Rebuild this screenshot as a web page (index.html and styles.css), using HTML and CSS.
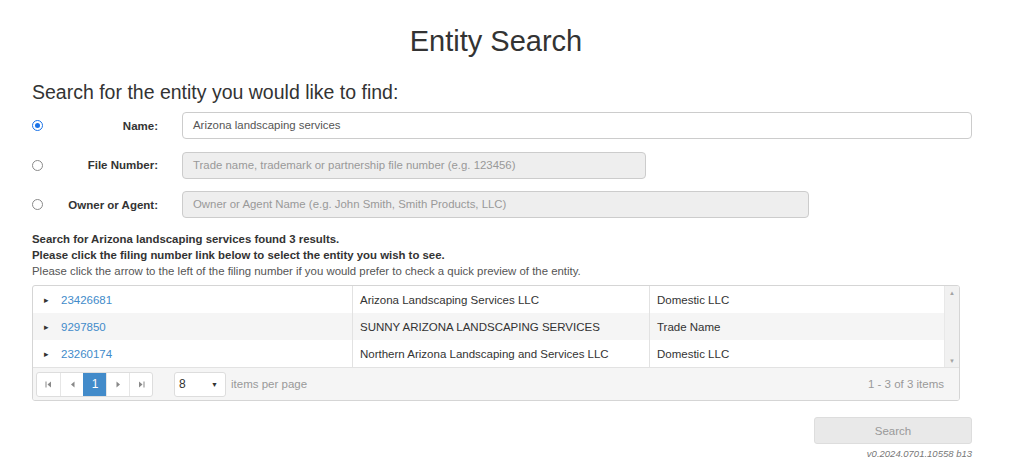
FILE: index.html
```html
<!DOCTYPE html>
<html>
<head>
<meta charset="utf-8">
<link rel="stylesheet" href="styles.css">
</head>
<body>
<div class="page">
  <h1 class="title">Entity Search</h1>
  <h2 class="subtitle">Search for the entity you would like to find:</h2>
  <div class="form">
    <div class="frow">
      <span class="radio checked"></span>
      <label class="flabel">Name:</label>
      <div class="input w-name">Arizona landscaping services</div>
    </div>
    <div class="frow">
      <span class="radio"></span>
      <label class="flabel">File Number:</label>
      <div class="input disabled w-file">Trade name, trademark or partnership file number (e.g. 123456)</div>
    </div>
    <div class="frow">
      <span class="radio"></span>
      <label class="flabel">Owner or Agent:</label>
      <div class="input disabled w-owner">Owner or Agent Name (e.g. John Smith, Smith Products, LLC)</div>
    </div>
  </div>
  <div class="msg">
    <p class="b">Search for Arizona landscaping services found 3 results.</p>
    <p class="b">Please click the filing number link below to select the entity you wish to see.</p>
    <p>Please click the arrow to the left of the filing number if you would prefer to check a quick preview of the entity.</p>
  </div>
  <div class="grid">
    <div class="gbody">
      <div class="rows">
        <div class="grow">
          <div class="c c1"><span class="tri">&#9656;</span><a class="lnk">23426681</a></div>
          <div class="c c2">Arizona Landscaping Services LLC</div>
          <div class="c c3">Domestic LLC</div>
        </div>
        <div class="grow alt">
          <div class="c c1"><span class="tri">&#9656;</span><a class="lnk">9297850</a></div>
          <div class="c c2">SUNNY ARIZONA LANDSCAPING SERVICES</div>
          <div class="c c3">Trade Name</div>
        </div>
        <div class="grow">
          <div class="c c1"><span class="tri">&#9656;</span><a class="lnk">23260174</a></div>
          <div class="c c2">Northern Arizona Landscaping and Services LLC</div>
          <div class="c c3">Domestic LLC</div>
        </div>
      </div>
      <div class="sbar">
        <span class="sarrow">&#9650;</span>
        <span class="sarrow">&#9660;</span>
      </div>
    </div>
    <div class="pager">
      <div class="pbtns">
        <span class="pb"><svg width="7" height="7" viewBox="0 0 7 7"><rect x="0.5" y="0.5" width="1" height="6" fill="#888"/><path d="M6 0.5 L2.5 3.5 L6 6.5 Z" fill="#888"/></svg></span>
        <span class="pb"><svg width="5" height="7" viewBox="0 0 5 7"><path d="M4.5 0.5 L1 3.5 L4.5 6.5 Z" fill="#888"/></svg></span>
        <span class="pb active">1</span>
        <span class="pb"><svg width="5" height="7" viewBox="0 0 5 7"><path d="M0.5 0.5 L4 3.5 L0.5 6.5 Z" fill="#888"/></svg></span>
        <span class="pb"><svg width="7" height="7" viewBox="0 0 7 7"><path d="M1 0.5 L4.5 3.5 L1 6.5 Z" fill="#888"/><rect x="5.5" y="0.5" width="1" height="6" fill="#888"/></svg></span>
      </div>
      <div class="psel"><span>8</span><span class="caret">&#9660;</span></div>
      <span class="ptext">items per page</span>
      <span class="pinfo">1 - 3 of 3 items</span>
    </div>
  </div>
  <div class="actions">
    <button class="sbtn">Search</button>
    <div class="ver">v0.2024.0701.10558 b13</div>
  </div>
</div>
</body>
</html>
```
FILE: styles.css
```css
html, body {
  margin: 0;
  padding: 0;
  background: #fff;
}
body {
  font-family: "Liberation Sans", Arial, sans-serif;
  color: #333;
}
.page {
  width: 940px;
  padding: 0 0 0 32px;
}
.title {
  font-size: 29px;
  font-weight: normal;
  line-height: 34px;
  margin: 24px 12px 0 0;
  text-align: center;
  color: #333;
}
.subtitle {
  font-size: 19.5px;
  font-weight: normal;
  line-height: 24px;
  margin: 22px 0 0 0;
  color: #333;
}
.form {
  display: flex;
  flex-direction: column;
  gap: 12.5px;
  margin-top: 8px;
}
.frow {
  display: flex;
  align-items: center;
  height: 27px;
}
.radio {
  width: 9px;
  height: 9px;
  border: 1px solid #8a8a8a;
  border-radius: 50%;
  box-sizing: content-box;
  position: relative;
  flex: none;
}
.radio.checked {
  border-color: #1a73e8;
}
.radio.checked::after {
  content: "";
  position: absolute;
  left: 2px;
  top: 2px;
  width: 5px;
  height: 5px;
  border-radius: 50%;
  background: #1a73e8;
}
.flabel {
  width: 115px;
  text-align: right;
  font-size: 11.5px;
  font-weight: bold;
  color: #333;
  flex: none;
}
.input {
  margin-left: 24px;
  height: 27px;
  box-sizing: border-box;
  border: 1px solid #ccc;
  border-radius: 4px;
  padding: 0 10px;
  font-size: 11.4px;
  line-height: 25px;
  color: #555;
  background: #fff;
  white-space: nowrap;
  overflow: hidden;
}
.input.disabled {
  background: #eee;
  color: #999;
}
.w-name { width: 790px; }
.w-file { width: 464px; }
.w-owner { width: 627px; }
.msg {
  margin-top: 13px;
  font-size: 11.4px;
  line-height: 16px;
  color: #333;
}
.msg p {
  margin: 0;
}
.msg p.b {
  font-weight: bold;
}
.msg p:not(.b) {
  color: #555;
}
.grid {
  margin-top: 6px;
  width: 928px;
  border: 1px solid #d5d5d5;
  border-radius: 3px;
  box-sizing: border-box;
  overflow: hidden;
}
.gbody {
  display: flex;
}
.rows {
  flex: 1;
}
.grow {
  display: flex;
  height: 27px;
}
.grow.alt {
  background: #f5f5f5;
}
.c {
  display: flex;
  align-items: center;
  font-size: 11.5px;
  color: #333;
  box-sizing: border-box;
  padding-left: 7px;
  white-space: nowrap;
}
.c1 {
  width: 319px;
  padding-left: 11px;
}
.c2 {
  width: 297px;
  border-left: 1px solid #e2e2e2;
}
.c3 {
  flex: 1;
  border-left: 1px solid #e2e2e2;
}
.tri {
  font-size: 9px;
  color: #333;
  width: 17px;
}
.lnk {
  color: #428bca;
  text-decoration: none;
}
.sbar {
  width: 14px;
  display: flex;
  flex-direction: column;
  justify-content: space-between;
  align-items: center;
  background: #f1f1f1;
  border-left: 1px solid #e8e8e8;
  padding: 3px 0 2px;
}
.sarrow {
  font-size: 6px;
  color: #a3a3a3;
  line-height: 8px;
}
.pager {
  display: flex;
  align-items: center;
  height: 32px;
  background: #f5f5f5;
  border-top: 1px solid #e2e2e2;
  padding: 0 15px 0 3px;
  font-size: 11.5px;
}
.pbtns {
  display: flex;
  border: 1px solid #ddd;
  border-radius: 3px;
  background: #fff;
  overflow: hidden;
}
.pb {
  width: 23px;
  height: 23px;
  display: flex;
  align-items: center;
  justify-content: center;
  border-left: 1px solid #e6e6e6;
  box-sizing: border-box;
  color: #fff;
  font-size: 12px;
}
.pb:first-child {
  border-left: none;
}
.pb.active {
  background: #428bca;
  border-left-color: #428bca;
}
.psel {
  margin-left: 21px;
  width: 52px;
  height: 25px;
  box-sizing: border-box;
  border: 1px solid #ddd;
  border-radius: 3px;
  background: #fff;
  display: flex;
  align-items: center;
  justify-content: space-between;
  padding: 0 7px 0 4px;
  color: #333;
  font-size: 12px;
}
.caret {
  font-size: 7px;
  color: #333;
}
.ptext {
  margin-left: 5px;
  color: #999;
}
.pinfo {
  margin-left: auto;
  color: #999;
}
.actions {
  display: flex;
  flex-direction: column;
  align-items: flex-end;
  margin-top: 16px;
}
.sbtn {
  width: 158px;
  height: 27px;
  border: 1px solid #ddd;
  border-radius: 3px;
  background: #e9e9e9;
  color: #999;
  font-family: "Liberation Sans", Arial, sans-serif;
  font-size: 11.5px;
  padding: 0;
}
.ver {
  margin-top: 4px;
  font-size: 9.5px;
  font-style: italic;
  color: #777;
}
```
